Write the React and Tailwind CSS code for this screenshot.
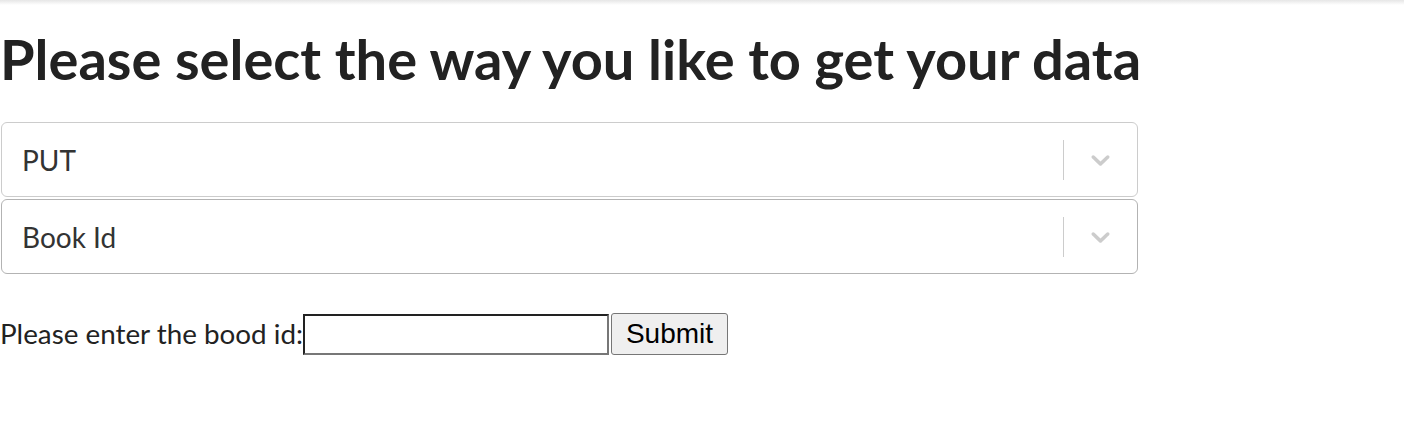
import React from "react";

function Chevron() {
  return (
    <svg viewBox="0 0 20 20" width="31" height="31" fill="#cccccc" aria-hidden="true">
      <path d="M4.516 7.548c0.436-0.446 1.043-0.481 1.576 0l3.908 3.747 3.908-3.747c0.533-0.481 1.141-0.446 1.574 0 0.436 0.445 0.408 1.197 0 1.615-0.406 0.418-4.695 4.502-4.695 4.502-0.217 0.223-0.502 0.335-0.787 0.335s-0.57-0.112-0.789-0.335c0 0-4.287-4.084-4.695-4.502s-0.436-1.17 0-1.615z" />
    </svg>
  );
}

function Select({ value, borderClass }) {
  return (
    <div className={`flex h-[75px] items-center rounded-[6px] border bg-white ${borderClass}`}>
      <div className="flex-1 pl-[20px] text-[28px] text-[#333333]">{value}</div>
      <div className="flex h-full items-center">
        <span className="h-[40px] w-px bg-[#cccccc]" />
        <div className="flex w-[73px] items-center justify-center">
          <Chevron />
        </div>
      </div>
    </div>
  );
}

export default function App() {
  return (
    <div className="relative min-h-[430px] bg-white font-['Lato',sans-serif] text-[#222222]">
      <div className="h-[5px] w-full bg-gradient-to-b from-[#e6e6e6] to-white" />
      <div className="w-[1138px]">
        <h1 className="mt-[20px] whitespace-nowrap text-[56px] font-bold leading-[68px]">
          Please select the way you like to get your data
        </h1>
        <div className="mt-[29px] flex flex-col gap-[2px] pl-px">
          <Select value="PUT" borderClass="border-[#cccccc]" />
          <Select value="Book Id" borderClass="border-[#b3b3b3]" />
        </div>
        <div className="mt-[39px] flex items-center text-[27.8px]">
          <span className="text-[#222222]">Please enter the bood id:</span>
          <input
            type="text"
            className="h-[41px] w-[306px] border-2 border-t-[#222222] border-l-[#222222] border-b-[#777777] border-r-[#777777] bg-white outline-none"
          />
          <button className="ml-[2px] h-[42px] rounded-[3px] border border-[#767676] bg-[#efefef] px-[14px] font-['Liberation_Sans',Arial,sans-serif] text-[28px] leading-none text-black">
            Submit
          </button>
        </div>
      </div>
    </div>
  );
}
